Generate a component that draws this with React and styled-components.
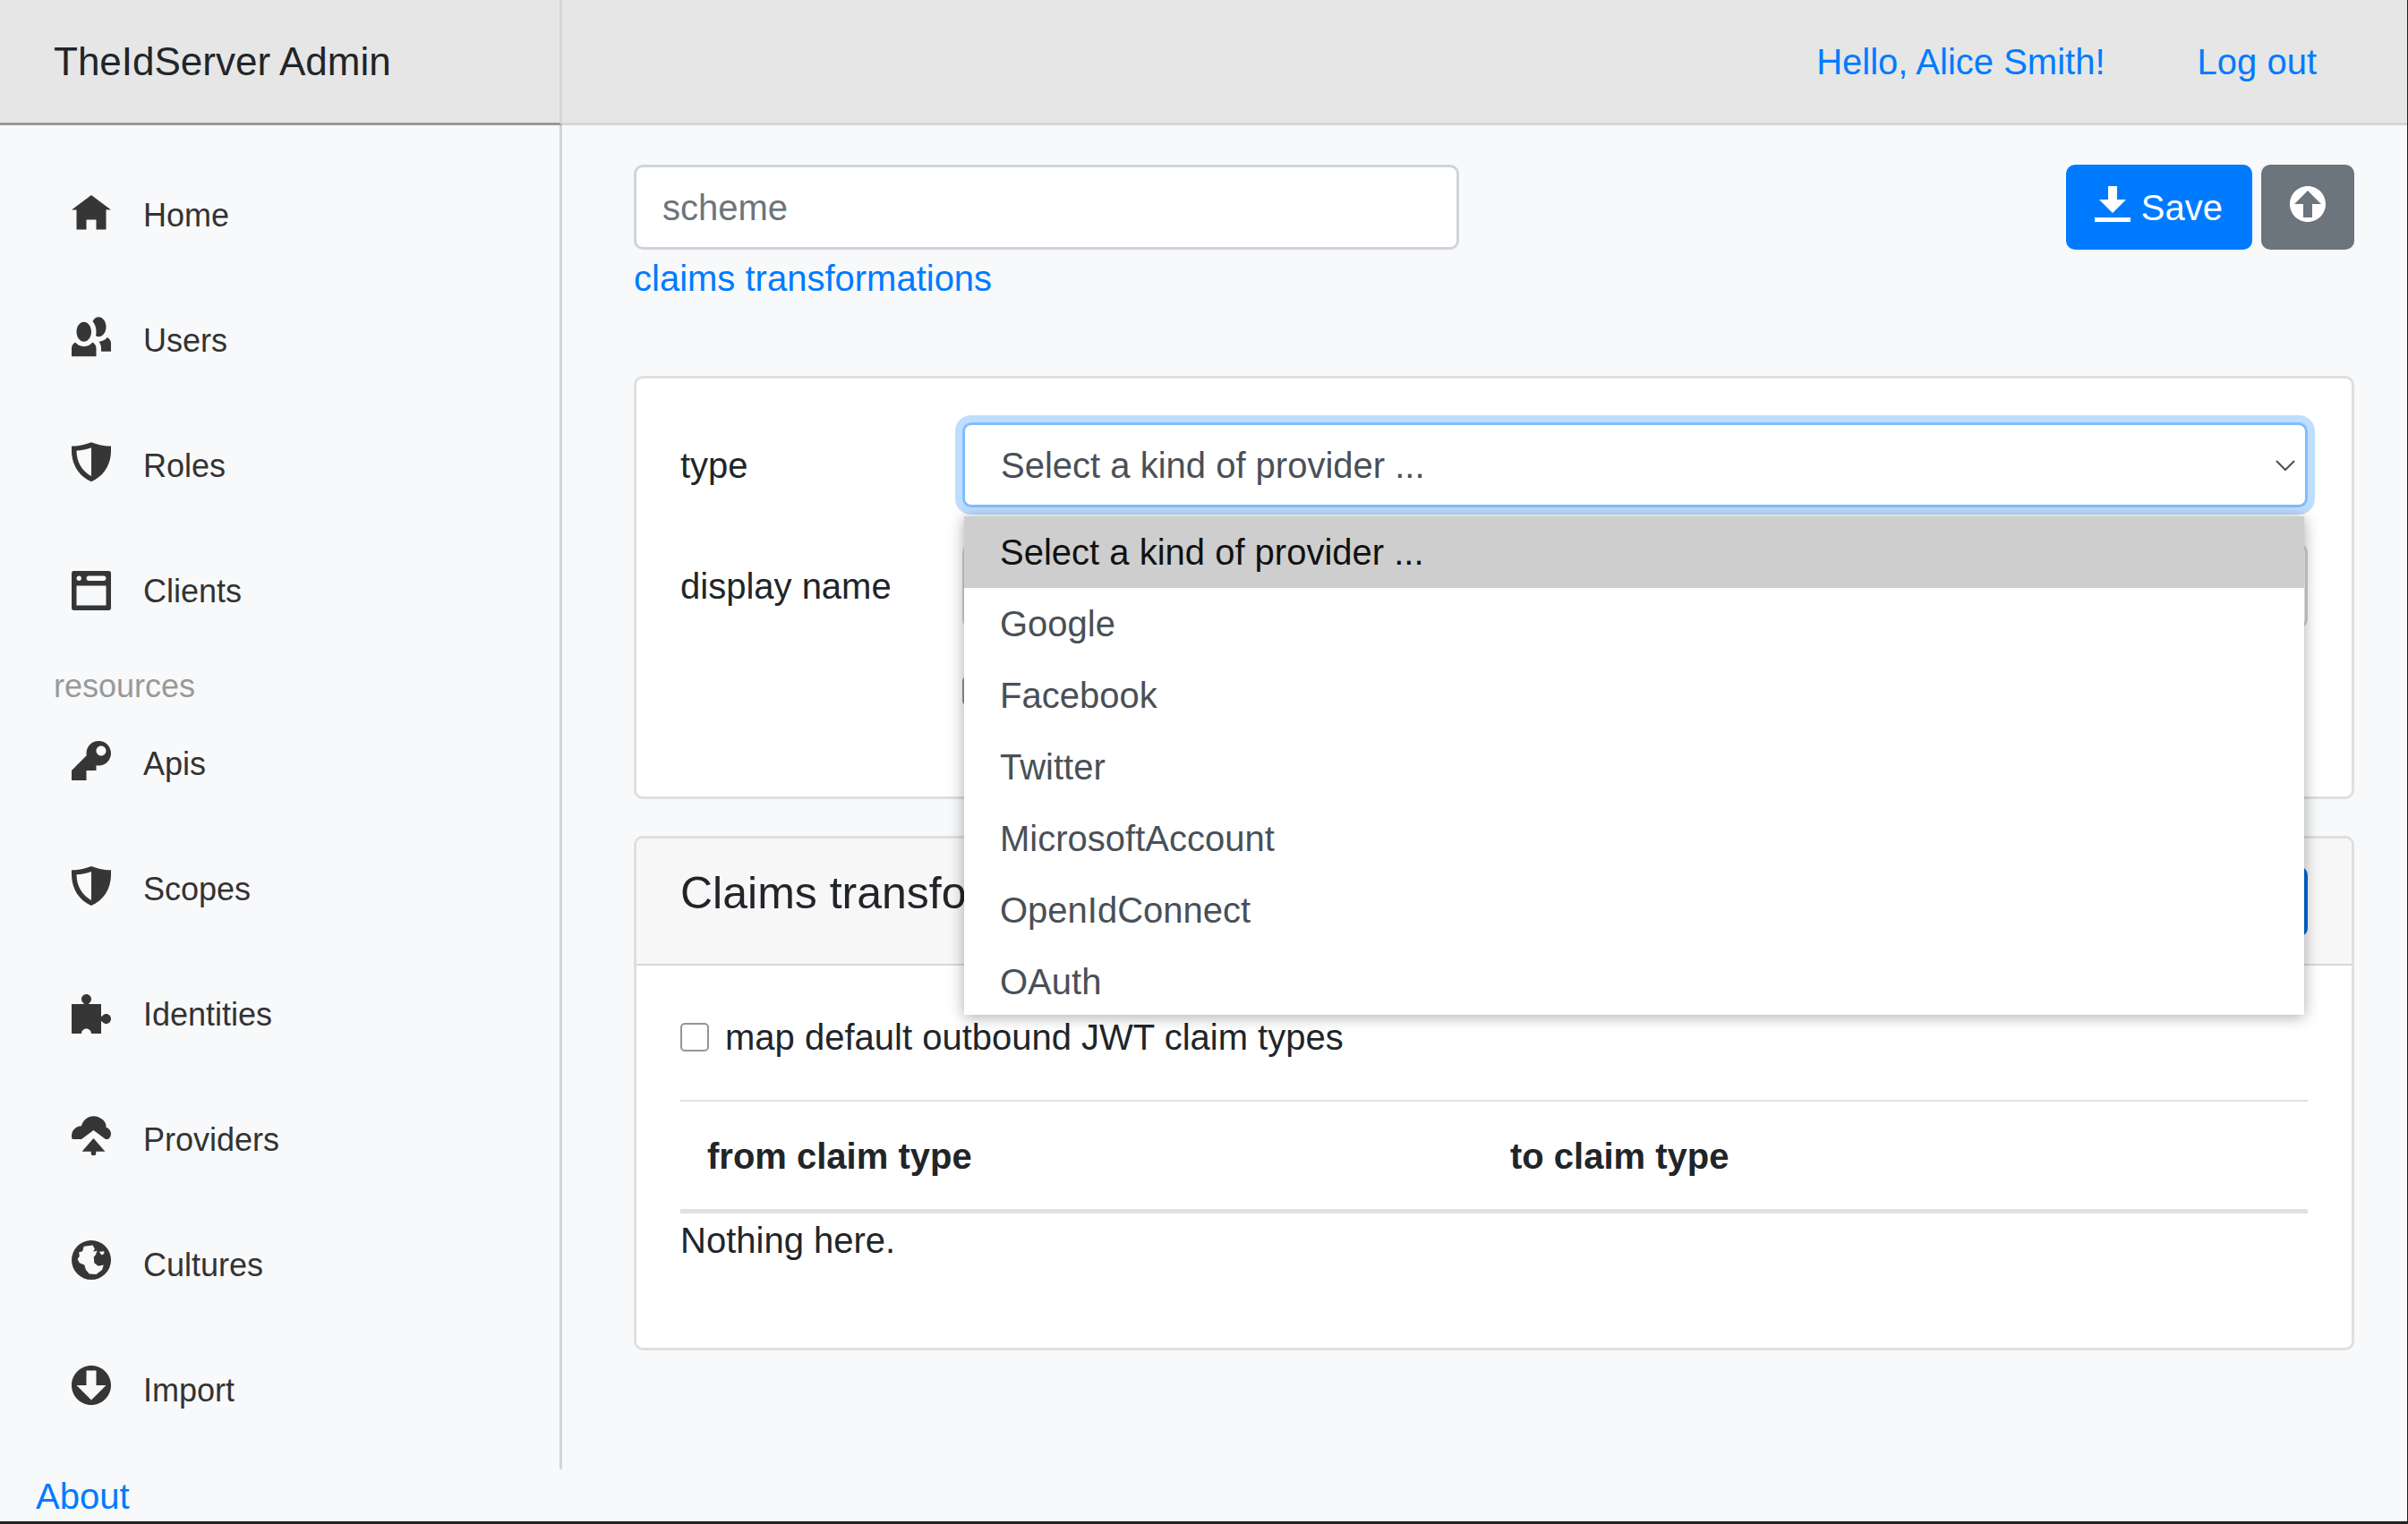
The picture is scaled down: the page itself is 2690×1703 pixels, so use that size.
import React from "react";
import styled, { createGlobalStyle } from "styled-components";

const Global = createGlobalStyle`
  * { box-sizing: border-box; }
  html, body { margin: 0; padding: 0; background: #f8f9fa; }
  body { font-family: "Liberation Sans", Arial, sans-serif; font-size: 40px; line-height: 60px; color: #212529; }
`;

const Shell = styled.div`
  width: 2690px;
  height: 1703px;
  display: grid;
  grid-template-columns: 628px 1fr;
  overflow: hidden;
  background: #f8f9fa;
  border-right: 1px solid #222;
  border-bottom: 3px solid #222;
`;

const Sidebar = styled.aside`
  display: flex;
  flex-direction: column;
  height: 1700px;
`;

const Brand = styled.div`
  height: 140px;
  flex: none;
  display: flex;
  align-items: center;
  padding: 0 0 0 60px;
  background: #e6e6e6;
  border-bottom: 3px solid #999;
  border-right: 3px solid #d6d5d5;
  font-size: 44px;
  color: #212529;
`;

const Nav = styled.nav`
  height: 1502px;
  flex: none;
  padding-top: 30px;
  border-right: 3px solid #d6d5d5;
`;

const NavRow = styled.a`
  height: 140px;
  display: flex;
  align-items: center;
  padding-left: 80px;
  font-size: 36px;
  color: #333;
`;

const NavLabel = styled.span`
  padding-top: 1px;
`;

const NavIcon = styled.svg`
  width: 44px;
  height: 44px;
  margin-right: 36px;
  flex: none;
  overflow: visible;
  fill: #363636;
`;

const NavHeading = styled.div`
  height: 53px;
  display: flex;
  align-items: center;
  padding: 20px 0 0 60px;
  font-size: 36px;
  color: #999;
`;

const AboutLink = styled.a`
  flex: 1;
  display: flex;
  align-items: center;
  padding: 0 0 0 40px;
  font-size: 40px;
  color: #007bff;
`;

const Main = styled.main`
  display: flex;
  flex-direction: column;
  min-width: 0;
`;

const TopBar = styled.header`
  height: 140px;
  flex: none;
  display: flex;
  justify-content: flex-end;
  align-items: center;
  gap: 103px;
  padding: 0 101px 0 0;
  background: #e6e6e6;
  border-bottom: 3px solid #d6d5d5;
`;

const BlueLink = styled.a`
  color: #007bff;
`;

const TabLink = styled(BlueLink)`
  display: block;
  padding-top: 2px;
`;

const Content = styled.div`
  padding: 44px 59px 0 80px;
`;

const Toolbar = styled.div`
  display: flex;
  justify-content: space-between;
  align-items: flex-start;
  margin-bottom: 79px;
`;

const NameColumn = styled.div`
  width: 922px;
`;

const TextBox = styled.div`
  height: 95px;
  display: flex;
  align-items: center;
  padding: 0 29px;
  background: #fff;
  border: 3px solid #ced4da;
  border-radius: 10px;
  color: #6c757d;
`;

const Buttons = styled.div`
  display: flex;
  gap: 10px;
`;

const Button = styled.button`
  height: ${(p) => p.$height || 95}px;
  display: flex;
  align-items: center;
  gap: 12px;
  padding: 0 32px;
  border: 0;
  border-radius: 10px;
  background: ${(p) => p.$bg};
  color: #fff;
  font: inherit;
`;

const ButtonIcon = styled.svg`
  width: 40px;
  height: 40px;
  fill: #fff;
  margin-top: -7px;
`;

const SaveLabel = styled.span`
  padding-right: 1px;
`;

const Card = styled.section`
  background: #fff;
  border: 3px solid #dfdfdf;
  border-radius: 10px;
  margin-bottom: 41px;
`;

const CardBody = styled.div`
  padding: ${(p) => p.$padding};
`;

const FormRow = styled.div`
  display: grid;
  grid-template-columns: 315px 1fr;
  align-items: center;
  margin-bottom: 40px;
`;

const SelectWrap = styled.div`
  position: relative;
`;

const SelectBox = styled.div`
  height: 95px;
  display: flex;
  align-items: center;
  justify-content: space-between;
  padding: 0 10px 0 40px;
  background: #fff;
  border: 3px solid #80bdff;
  border-radius: 10px;
  box-shadow: 0 0 0 8px rgba(0, 123, 255, 0.25);
  color: #495057;
`;

const Chevron = styled.svg`
  width: 24px;
  height: 14px;
  fill: none;
  stroke: #495057;
  stroke-width: 2;
`;

const Dropdown = styled.ul`
  position: absolute;
  z-index: 10;
  top: 105px;
  left: 2px;
  width: 1497px;
  height: 557px;
  margin: 0;
  padding: 0;
  list-style: none;
  overflow: hidden;
  background: #fff;
  box-shadow: 0 2px 16px rgba(0, 0, 0, 0.34);
`;

const Option = styled.li`
  height: 80px;
  display: flex;
  align-items: center;
  padding-left: 40px;
  background: ${(p) => (p.$active ? "#cecece" : "#fff")};
  color: ${(p) => (p.$active ? "#111" : "#495057")};
`;

const Checkbox = styled.span`
  width: 32px;
  height: 32px;
  flex: none;
  background: #fff;
  border: 2px solid #959595;
  border-radius: 5px;
`;

const CheckRow = styled.label`
  display: flex;
  align-items: center;
  gap: 18px;
  height: 60px;
`;

const CardHeader = styled.div`
  display: flex;
  justify-content: space-between;
  align-items: flex-start;
  padding: 31px 49px 30px;
  background: #f7f7f7;
  border-bottom: 2px solid #d8d8d8;
  border-radius: 7px 7px 0 0;
`;

const CardTitle = styled.h5`
  margin: 0;
  font-size: 50px;
  line-height: 60px;
  font-weight: 400;
`;

const Rule = styled.hr`
  height: 2px;
  margin: 40px 0 1px;
  border: 0;
  background: #dee2e6;
`;

const Table = styled.table`
  width: 100%;
  table-layout: fixed;
  border-collapse: collapse;
`;

const HeadCell = styled.th`
  width: ${(p) => p.$width || "auto"};
  padding: 30px 30px 29px;
  border-bottom: 5px solid #dee2e6;
  text-align: left;
  font-weight: 700;
`;

const EmptyText = styled.p`
  margin: 0 0 40px;
`;

const icons = {
  home: "M4 0l-4 3h1v4h2v-2h2v2h2v-4.03l1 .03-4-3z",
  people:
    "M5.5 0c-.51 0-.95.35-1.22.88.45.54.72 1.28.72 2.13 0 .29-.03.55-.09.81.19.11.38.19.59.19.83 0 1.5-.9 1.5-2s-.67-2-1.5-2zm-3 1c-.83 0-1.5.9-1.5 2s.67 2 1.5 2 1.5-.9 1.5-2-.67-2-1.5-2zm4.75 3.16c-.43.51-1.02.82-1.69.84.27.38.44.84.44 1.34v.66h2v-1.66c0-.52-.31-.97-.75-1.19zm-6.5 1c-.44.22-.75.67-.75 1.19v1.66h5v-1.66c0-.52-.31-.97-.75-1.19-.45.53-1.06.84-1.75.84s-1.3-.32-1.75-.84z",
  shield:
    "M4 0C3 .4 1.6.8 0 .8v.9C0 4.7 1.6 7 4 8c2.4-1 4-3.3 4-6.3V.8C6.400.8 5 .4 4 0zm0 1.100v5.800C2.300 6 1 4.200 1 1.700c1 0 2.100-.3 3-.6z",
  browser:
    "M.34 0a.5.5 0 0 0-.34.5v7a.5.5 0 0 0 .5.5h7a.5.5 0 0 0 .5-.5v-7a.5.5 0 0 0-.5-.5h-7a.5.5 0 0 0-.09 0 .5.5 0 0 0-.06 0zm1.160 1c.28 0 .5.22.5.5s-.22.5-.5.5-.5-.22-.5-.5.22-.5.5-.5zm2 0h3c.28 0 .5.22.5.5s-.22.5-.5.5h-3c-.28 0-.5-.22-.5-.5s.22-.5.5-.5zm-2.500 2h6v4h-6v-4z",
  key: "M5.500 0c-1.380 0-2.500 1.120-2.500 2.500 0 .16 0 .32.030.47l-3.030 3.030v2h3v-2h2v-1l.030-.030c.15.030.31.030.47.030 1.380 0 2.500-1.120 2.500-2.500s-1.120-2.500-2.500-2.500zm.500 1c.55 0 1 .45 1 1s-.45 1-1 1-1-.45-1-1 .45-1 1-1z",
  puzzle:
    "M3 0c-.55 0-1 .45-1 1 0 .2.06.39.16.53.1.14.34.22.34.47h-2.500v6h2c0-.55.45-1 1-1s1 .45 1 1h2v-2.500c.25 0 .33.24.47.34.14.1.33.16.53.16.55 0 1-.45 1-1s-.45-1-1-1c-.2 0-.39.06-.53.16-.14.1-.22.34-.47.34v-2.500h-2.500c0-.25.24-.33.34-.47.1-.14.16-.33.16-.53 0-.55-.45-1-1-1z",
  cloud:
    "M4.500 0c-1.210 0-2.270.86-2.500 2-1.100 0-2 .9-2 2 0 .25.05.5.14.7H2L4.450 2.900L6.900 4.700h.5c.35-.25.6-.6.6-1.100 0-.65-.41-1.090-1-1.300v-.3c0-1.100-1.400-2-2.500-2zM4.450 4.500L2.100 7.200H3.950V7.600c0 .28.22.4.5.4s.5-.12.5-.4V7.200H6.800Z",
  globe:
    "M4 0a4 4 0 1 0 0 8a4 4 0 1 0 0-8zM2.500 1.200L4.300 1L4.700 1.700L4.400 2.300L5.200 2.100L4.900 2.900L4.500 3.400L4.600 4.600L5.400 5.200L6.500 5L6.200 6L5 6.900L3.600 6.800L2.900 6L2.600 5L1.600 4.600L1.200 3.800L1.600 3.200L1.500 2.400L2.200 2.200ZM5.600 2.300L6.600 2.200L6.600 2.700L6.100 3Z",
  circleDown:
    "M4 0c-2.210 0-4 1.790-4 4s1.790 4 4 4 4-1.790 4-4-1.790-4-4-4zm-1 1h2v3h2l-3 3-3-3h2v-3z",
  circleUp:
    "M4 0c-2.210 0-4 1.790-4 4s1.790 4 4 4 4-1.790 4-4-1.790-4-4-4zm0 1l3 3h-2v3h-2v-3h-2l3-3z",
  download: "M3 0v3h-2l3 3 3-3h-2v-3h-2zm-3 7v1h8v-1h-8z",
};

const mainItems = [
  { label: "Home", icon: "home", lift: 0 },
  { label: "Users", icon: "people", lift: 0.7 },
  { label: "Roles", icon: "shield", lift: 0.7 },
  { label: "Clients", icon: "browser", lift: 0 },
];

const resourceItems = [
  { label: "Apis", icon: "key", lift: 0.55 },
  { label: "Scopes", icon: "shield", lift: 0.55 },
  { label: "Identities", icon: "puzzle", lift: 0 },
  { label: "Providers", icon: "cloud", lift: 0.7 },
  { label: "Cultures", icon: "globe", lift: 0.9 },
  { label: "Import", icon: "circleDown", lift: 0.9 },
];

const options = [
  "Select a kind of provider ...",
  "Google",
  "Facebook",
  "Twitter",
  "MicrosoftAccount",
  "OpenIdConnect",
  "OAuth",
];

function NavItem({ label, icon, lift }) {
  return (
    <NavRow>
      <NavIcon viewBox={`0 ${lift} 8 8`}>
        <path fillRule="evenodd" d={icons[icon]} />
      </NavIcon>
      <NavLabel>{label}</NavLabel>
    </NavRow>
  );
}

export default function App() {
  return (
    <>
      <Global />
      <Shell>
        <Sidebar>
          <Brand>TheIdServer Admin</Brand>
          <Nav>
            {mainItems.map((item) => (
              <NavItem key={item.label} {...item} />
            ))}
            <NavHeading>resources</NavHeading>
            {resourceItems.map((item) => (
              <NavItem key={item.label} {...item} />
            ))}
          </Nav>
          <AboutLink>About</AboutLink>
        </Sidebar>
        <Main>
          <TopBar>
            <BlueLink>Hello, Alice Smith!</BlueLink>
            <BlueLink>Log out</BlueLink>
          </TopBar>
          <Content>
            <Toolbar>
              <NameColumn>
                <TextBox>scheme</TextBox>
                <TabLink>claims transformations</TabLink>
              </NameColumn>
              <Buttons>
                <Button $bg="#007bff">
                  <ButtonIcon viewBox="0 0 8 8">
                    <path d={icons.download} />
                  </ButtonIcon>
                  <SaveLabel>Save</SaveLabel>
                </Button>
                <Button $bg="#6c757d">
                  <ButtonIcon viewBox="0 0 8 8">
                    <path fillRule="evenodd" d={icons.circleUp} />
                  </ButtonIcon>
                </Button>
              </Buttons>
            </Toolbar>

            <Card>
              <CardBody $padding="49px 49px 48px">
                <FormRow>
                  <span>type</span>
                  <SelectWrap>
                    <SelectBox>
                      Select a kind of provider ...
                      <Chevron viewBox="0 0 24 14">
                        <path d="M2 2l10 10L22 2" />
                      </Chevron>
                    </SelectBox>
                    <Dropdown>
                      {options.map((option, index) => (
                        <Option key={option} $active={index === 0}>
                          {option}
                        </Option>
                      ))}
                    </Dropdown>
                  </SelectWrap>
                </FormRow>
                <FormRow>
                  <span>display name</span>
                  <TextBox />
                </FormRow>
                <FormRow>
                  <span />
                  <CheckRow>
                    <Checkbox />
                  </CheckRow>
                </FormRow>
              </CardBody>
            </Card>

            <Card>
              <CardHeader>
                <CardTitle>Claims transformations</CardTitle>
                <Button $bg="#0069d9" $height={79} />
              </CardHeader>
              <CardBody $padding="50px 49px">
                <CheckRow>
                  <Checkbox />
                  map default outbound JWT claim types
                </CheckRow>
                <Rule />
                <Table>
                  <thead>
                    <tr>
                      <HeadCell $width="897px">from claim type</HeadCell>
                      <HeadCell>to claim type</HeadCell>
                    </tr>
                  </thead>
                </Table>
                <EmptyText>Nothing here.</EmptyText>
              </CardBody>
            </Card>
          </Content>
        </Main>
      </Shell>
    </>
  );
}
